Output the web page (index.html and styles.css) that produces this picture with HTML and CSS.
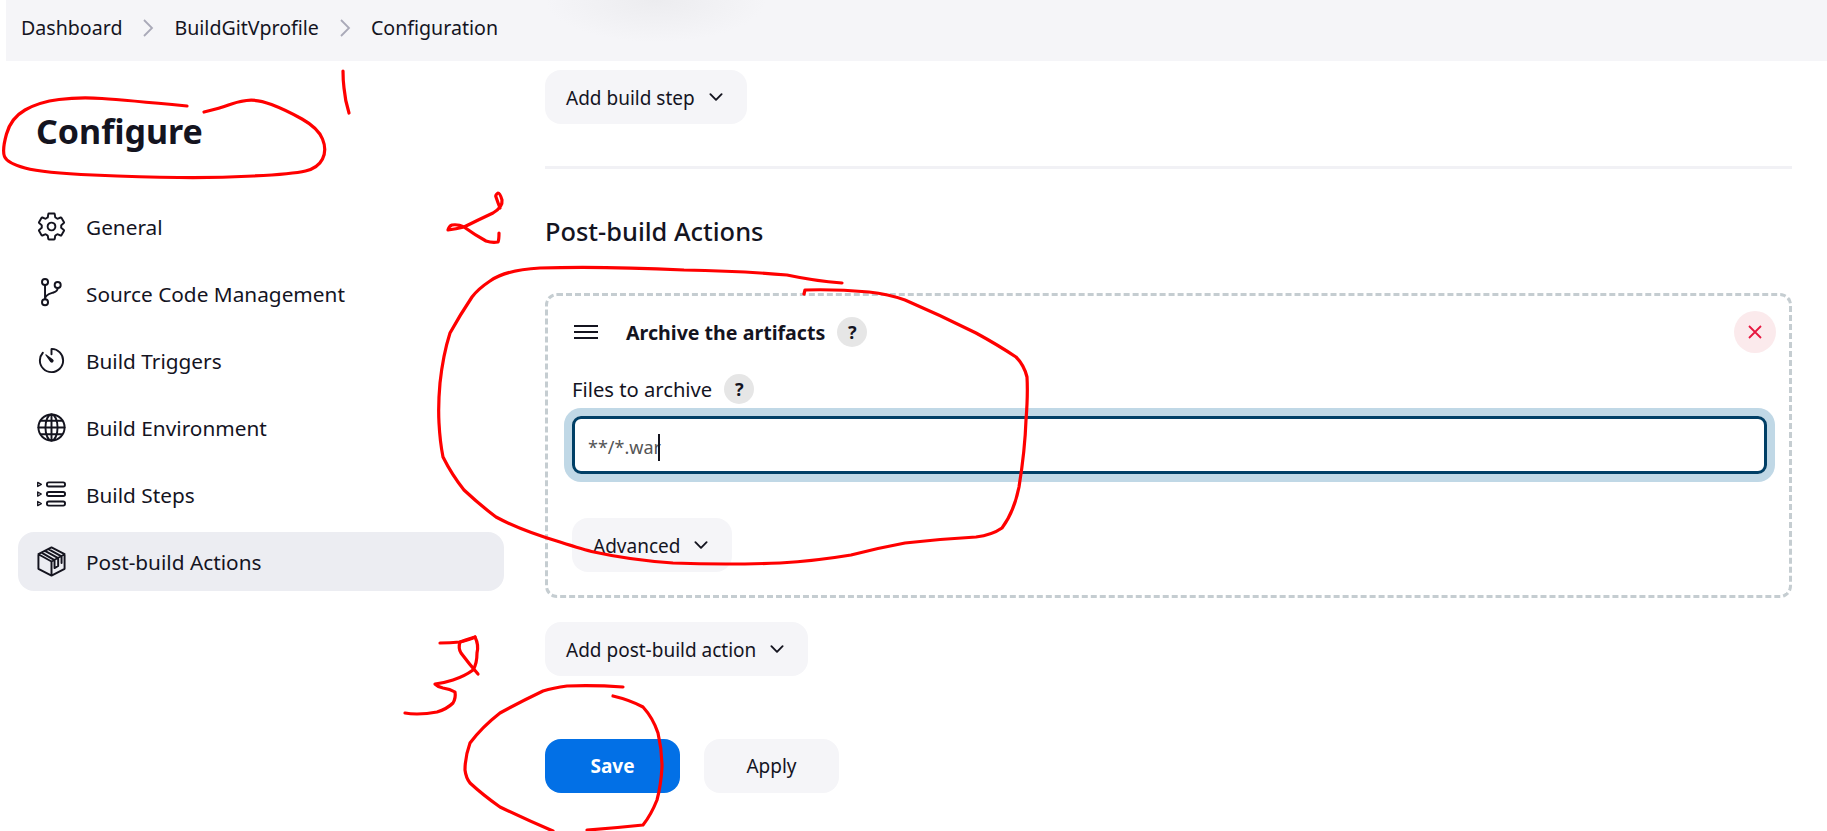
FILE: index.html
```html
<!DOCTYPE html>
<html>
  <head>
    <meta name="viewport" content="width=device-width, initial-scale=1.0">
    <link rel="stylesheet" href="styles.css">
    <title>Configuration</title>
  </head>
  <body>
    <!--Breadcrumbs-->
    <div class="bar">
      <span>Dashboard</span>
      <svg class="crumb" viewBox="0 0 12 20"><path d="M2 2l8 8-8 8"/></svg>
      <span>BuildGitVprofile</span>
      <svg class="crumb" viewBox="0 0 12 20"><path d="M2 2l8 8-8 8"/></svg>
      <span>Configuration</span>
    </div>

    <div class="page">
      <!--Side nav-->
      <div class="side">
        <h1 class="page-title">Configure</h1>
        <div class="nav-item">
          <svg class="nav-icon" viewBox="0 0 512 512"><path d="M262.29 192.31a64 64 0 1057.4 57.4 64.13 64.13 0 00-57.4-57.4zM416.39 256a154.34 154.34 0 01-1.53 20.79l45.21 35.46a10.81 10.81 0 012.45 13.75l-42.77 74a10.81 10.81 0 01-13.14 4.59l-44.9-18.08a16.11 16.11 0 00-15.17 1.75A164.48 164.48 0 01325 400.8a15.94 15.94 0 00-8.82 12.14l-6.73 47.89a11.08 11.08 0 01-10.68 9.17h-85.54a11.11 11.11 0 01-10.69-8.87l-6.72-47.82a16.07 16.07 0 00-9-12.22 155.3 155.3 0 01-21.46-12.57 16 16 0 00-15.11-1.71l-44.89 18.07a10.81 10.81 0 01-13.14-4.58l-42.77-74a10.8 10.8 0 012.45-13.75l38.21-30a16.05 16.05 0 006-14.08c-.36-4.17-.58-8.33-.58-12.5s.21-8.27.58-12.35a16 16 0 00-6.07-13.94l-38.19-30A10.81 10.81 0 0149.48 186l42.77-74a10.81 10.81 0 0113.14-4.59l44.9 18.08a16.11 16.11 0 0015.17-1.75A164.48 164.48 0 01187 111.2a15.94 15.94 0 008.82-12.14l6.73-47.89A11.08 11.08 0 01213.23 42h85.54a11.11 11.11 0 0110.69 8.87l6.72 47.82a16.07 16.07 0 009 12.22 155.3 155.3 0 0121.46 12.57 16 16 0 0015.11 1.71l44.89-18.07a10.81 10.81 0 0113.14 4.58l42.77 74a10.8 10.8 0 01-2.45 13.75l-38.21 30a16.05 16.05 0 00-6.05 14.08c.33 4.14.55 8.3.55 12.47z"/></svg>
          <span>General</span>
        </div>
        <div class="nav-item">
          <svg class="nav-icon" viewBox="0 0 512 512"><circle cx="149" cy="66" r="50"/><circle cx="149" cy="400" r="50"/><circle cx="358" cy="115" r="50"/><path d="M149 116v234M358 165c0 40-30 62-70 75-50 16-139 30-139 110"/></svg>
          <span>Source Code Management</span>
        </div>
        <div class="nav-item">
          <svg class="nav-icon" viewBox="0 0 512 512"><path d="M112.91 128A191.85 191.85 0 0064 254c-1.18 106.35 85.65 193.8 192 194 106.2.2 192-85.83 192-192 0-104.54-83.55-189.61-187.5-192a4.36 4.36 0 00-4.5 4.37V152"/><path class="nav-fill" d="M233.38 278.63l-79-113a8.13 8.13 0 0111.32-11.32l113 79a32.5 32.5 0 01-37 53.34 33.21 33.21 0 01-9.32-8.02z"/></svg>
          <span>Build Triggers</span>
        </div>
        <div class="nav-item">
          <svg class="nav-icon" viewBox="0 0 512 512"><circle cx="256" cy="256" r="216"/><ellipse cx="256" cy="256" rx="100" ry="216"/><path d="M256 40v432M40 256h432M82 144h348M82 368h348"/></svg>
          <span>Build Environment</span>
        </div>
        <div class="nav-item">
          <svg class="nav-icon" viewBox="0 0 512 512"><rect x="181" y="56" width="298" height="68" rx="30"/><rect x="181" y="214" width="298" height="68" rx="30"/><rect x="181" y="372" width="298" height="68" rx="30"/><path class="nav-thin" d="M28 56l60 34-60 34zM28 214l60 34-60 34zM28 372l60 34-60 34z"/></svg>
          <span>Build Steps</span>
        </div>
        <div class="nav-item active">
          <svg class="nav-icon" viewBox="0 0 512 512"><path d="M256 24l216 112v240L256 488 40 376V136zM40 136l216 120 216-120M256 256v232M148 80l218 120v130l-60 34V232L92 110M204 52l218 120v110"/></svg>
          <span>Post-build Actions</span>
        </div>
      </div>

      <!--Form-->
      <div class="main">
        <button class="btn chevron-btn">Add build step
          <svg class="chevron" viewBox="0 0 512 512"><path d="M112 184l144 144 144-144"/></svg>
        </button>
        <div class="rule"></div>
        <h2 class="section-title">Post-build Actions</h2>

        <div class="step">
          <div class="step-head">
            <svg class="handle" viewBox="0 0 24 14"><path d="M0 1h24M0 7h24M0 13h24"/></svg>
            <b class="step-title">Archive the artifacts</b>
            <span class="help">?</span>
            <span class="close">
              <svg viewBox="0 0 14 14"><path d="M1 1l12 12M13 1L1 13"/></svg>
            </span>
          </div>
          <div class="field-label">
            <span>Files to archive</span>
            <span class="help">?</span>
          </div>
          <div class="text-input"><span>**/*.war</span><i class="caret"></i></div>
          <button class="btn chevron-btn advanced">Advanced
            <svg class="chevron" viewBox="0 0 512 512"><path d="M112 184l144 144 144-144"/></svg>
          </button>
        </div>

        <button class="btn chevron-btn add-post">Add post-build action
          <svg class="chevron" viewBox="0 0 512 512"><path d="M112 184l144 144 144-144"/></svg>
        </button>

        <div class="actions">
          <button class="btn save">Save</button>
          <button class="btn apply">Apply</button>
        </div>
      </div>
    </div>

    <!--Hand drawn marks on top of the page-->
    <svg class="marks" viewBox="0 0 1827 831">
      <path d="M187 106Q125 100 102 98.500Q79 97 59 99.500Q39 102 25 110Q11 118 6.500 134Q2 150 4.500 156.500Q7 163 25 168Q43 173 93 175Q143 177 178.500 177.500Q214 178 253.500 176Q293 174 305.500 171Q318 168 322.500 159Q327 150 322.500 139Q318 128 302 119Q286 110 271.500 104.500Q257 99 246.500 100.500Q236 102 228.500 105Q221 108 204 112"/>
      <path d="M343 71Q343 80 344 88Q345 100 349 113"/>
      <path d="M499 233Q499 240 498 242Q492 243 486 241Q475 235 464 227Q456 229 448 230Q449 226 452 225Q458 224 464 227Q478 220 493 213Q503 207 502 200Q500 193 498 193Q495 195 496 197Q498 203 500 208"/>
      <path d="M842 283Q815 281 787 275Q740 271 684 270Q600 266 540 268Q505 270 490 281Q478 289 472 297Q460 315 450 333Q443 355 440 383Q438 405 439 423Q440 442 443 457Q452 475 464 490Q480 505 496 517Q520 530 560 542Q585 550 594 552Q630 560 673 563Q725 565 780 563Q815 561 851 555Q878 548 905 543Q940 539 976 537Q992 535 1002 528Q1014 512 1019 487Q1025 450 1026 420Q1028 395 1027 377Q1024 365 1016 357Q998 345 976 333Q940 315 905 300Q888 294 869 292Q835 289 805 290L804 294"/>
      <path d="M440 643Q450 643 460 642Q470 640 475 637Q479 645 477 653Q477 664 473 670Q465 676 453 680Q444 683 435 684Q438 687 443 688Q450 689 455 692Q456 698 453 703Q447 709 437 712Q427 714 417 714Q410 714 405 713"/>
      <path d="M475 637Q465 640 460 642Q458 648 461 653Q470 665 478 674"/>
      <path d="M623 687Q595 685 567 686Q553 688 543 691Q520 702 500 713Q482 727 470 743Q465 757 465 770Q466 778 470 783Q483 795 500 807Q527 820 553 831"/>
      <path d="M613 696Q630 700 643 707Q653 718 658 733Q662 750 662 767Q661 785 657 800Q651 815 643 825Q615 828 587 830"/>
    </svg>
  </body>
</html>
```

FILE: styles.css
```css
* {
  box-sizing: border-box;
}

html,
body {
  height: 831px;
  overflow: hidden;
}

body {
  margin: 0;
  position: relative;
  background-color: white;
  color: #14141f;
  font-family: "Noto Sans", "Open Sans", sans-serif;
  font-size: 19px;
}

button {
  font-family: inherit;
  font-size: inherit;
  color: inherit;
  border: none;
}

.bar {
  display: flex;
  align-items: center;
  height: 61px;
  margin-left: 6px;
  padding: 0 0 6px 15px;
  font-size: 19.600px;
  background-color: #f5f5f8;
  background-image: radial-gradient(ellipse 110px 42px at 650px 0, #ececef, #f5f5f8);
}

.crumb {
  width: 12px;
  height: 20px;
  margin: 0 20px;
  fill: none;
  stroke: #a9a9b8;
  stroke-width: 1.8;
}

.page {
  display: flex;
}

.side {
  width: 486px;
  margin-left: 18px;
  flex: none;
}

.page-title {
  margin: 0;
  padding: 47px 0 0 18px;
  height: 136px;
  font-size: 34px;
  line-height: 46px;
  font-weight: 700;
}

.nav-item {
  display: flex;
  align-items: center;
  gap: 19px;
  height: 59px;
  padding-left: 18px;
  margin-bottom: 8px;
  border-radius: 16px;
  font-size: 20.800px;
}

.active {
  background-color: #ecedf2;
}

.nav-icon {
  width: 31px;
  height: 31px;
  flex: none;
  fill: none;
  stroke: #14141f;
  stroke-width: 32;
  stroke-linecap: round;
  stroke-linejoin: round;
}

.nav-fill {
  fill: #14141f;
  stroke: none;
}

.nav-thin {
  stroke-width: 22;
}

.main {
  flex: 1;
  margin: 9px 35px 0 41px;
}

.btn {
  display: block;
  height: 54px;
  border-radius: 16px;
  background-color: #f5f5f8;
}

.chevron-btn {
  display: flex;
  align-items: center;
  gap: 11px;
  padding: 2px 21px 0;
}

.chevron {
  width: 20px;
  height: 20px;
  margin-top: -2px;
  fill: none;
  stroke: #14141f;
  stroke-width: 48;
  stroke-linecap: round;
  stroke-linejoin: round;
}

.rule {
  height: 3px;
  margin-top: 42px;
  background-color: #f1f1f5;
}

.section-title {
  margin: 0;
  padding-top: 44px;
  height: 124px;
  font-size: 25.400px;
  line-height: 36px;
  font-weight: 500;
}

.step {
  height: 305px;
  padding: 15px 13px 0 24px;
  border: 3px dashed #c5cdd1;
  border-radius: 12px;
}

.step-head {
  display: flex;
  align-items: center;
  height: 42px;
}

.handle {
  width: 24px;
  height: 14px;
  margin: 0 28px 0 2px;
  fill: none;
  stroke: #14141f;
  stroke-width: 2;
}

.step-title {
  font-size: 19.600px;
  font-weight: 700;
}

.help {
  display: flex;
  align-items: center;
  justify-content: center;
  width: 30px;
  height: 30px;
  margin-left: 12px;
  border-radius: 50%;
  background-color: #e6e6e6;
  font-size: 18px;
  font-weight: 700;
}

.close {
  display: flex;
  align-items: center;
  justify-content: center;
  width: 42px;
  height: 42px;
  margin-left: auto;
  border-radius: 50%;
  background-color: #fbeaec;
}

.close svg {
  width: 14px;
  height: 14px;
  fill: none;
  stroke: #e6173f;
  stroke-width: 1.8;
}

.field-label {
  display: flex;
  align-items: center;
  margin-top: 20px;
  height: 32px;
  font-size: 20.200px;
}

.text-input {
  display: flex;
  align-items: center;
  height: 58px;
  margin: 11px 9px 0 0;
  padding: 4px 0 0 13px;
  border: 3px solid #003f66;
  border-radius: 9px;
  box-shadow: 0 0 0 8px #c0d8e6;
  color: #555;
  font-size: 18px;
}

.caret {
  width: 2px;
  height: 27px;
  margin-left: -3px;
  background-color: #14141f;
}

.advanced {
  margin-top: 44px;
}

.add-post {
  margin-top: 24px;
}

.actions {
  display: flex;
  gap: 24px;
  margin-top: 63px;
}

.save,
.apply {
  width: 135px;
}

.save {
  background-color: #0270e6;
  color: white;
  font-weight: 700;
}

.marks {
  position: absolute;
  left: 0;
  top: 0;
  width: 1827px;
  height: 831px;
  pointer-events: none;
  fill: none;
  stroke: #f00;
  stroke-width: 3.200;
  stroke-linecap: round;
  stroke-linejoin: round;
}
```
